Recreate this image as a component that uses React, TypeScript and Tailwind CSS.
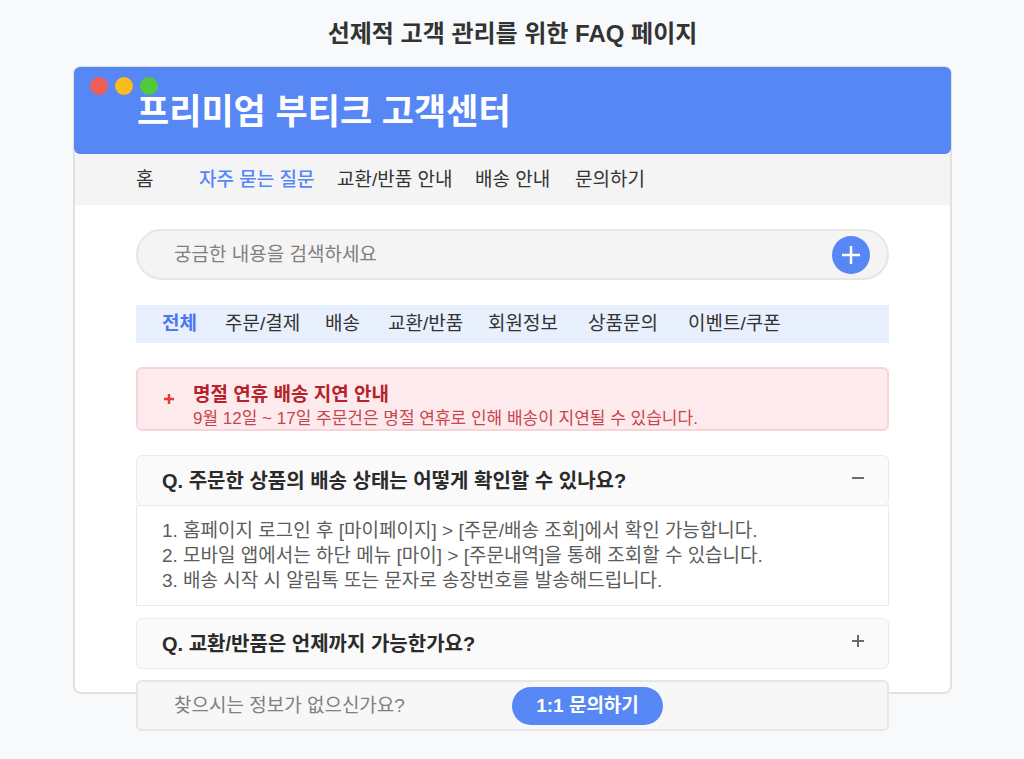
import { useState } from "react";

const navItems = [
  { label: "홈", width: "w-[63px]" },
  { label: "자주 묻는 질문", width: "w-[138px]" },
  { label: "교환/반품 안내", width: "w-[138px]" },
  { label: "배송 안내", width: "w-[100px]" },
  { label: "문의하기", width: "w-[100px]" },
];

const categories = [
  { label: "전체", width: "w-[63px]" },
  { label: "주문/결제", width: "w-[100px]" },
  { label: "배송", width: "w-[63px]" },
  { label: "교환/반품", width: "w-[100px]" },
  { label: "회원정보", width: "w-[100px]" },
  { label: "상품문의", width: "w-[100px]" },
  { label: "이벤트/쿠폰", width: "w-[100px]" },
];

const faqs = [
  {
    question: "Q. 주문한 상품의 배송 상태는 어떻게 확인할 수 있나요?",
    answer: [
      "1. 홈페이지 로그인 후 [마이페이지] > [주문/배송 조회]에서 확인 가능합니다.",
      "2. 모바일 앱에서는 하단 메뉴 [마이] > [주문내역]을 통해 조회할 수 있습니다.",
      "3. 배송 시작 시 알림톡 또는 문자로 송장번호를 발송해드립니다.",
    ],
  },
  {
    question: "Q. 교환/반품은 언제까지 가능한가요?",
    answer: [],
  },
];

function ToggleIcon({ open }: { open: boolean }) {
  return (
    <svg viewBox="0 0 12 12" className="mb-1.5 h-3 w-3" stroke="#6b6b6b" strokeWidth="2" aria-hidden="true">
      <path d="M0 6h12" />
      {!open && <path d="M6 0v12" />}
    </svg>
  );
}

export default function App() {
  const [category, setCategory] = useState("전체");
  const [openFaq, setOpenFaq] = useState(0);
  const [query, setQuery] = useState("");

  return (
    <div className="min-h-screen bg-[#f8f9fb] pr-[72px] pb-16 pl-[73px] font-['Liberation_Sans','Noto_Sans_CJK_KR',sans-serif] text-[19px] leading-6 text-[#333]">
      <h1 className="flex h-[66px] items-center justify-center pt-0.5 text-2xl font-bold whitespace-nowrap">
        선제적 고객 관리를 위한 FAQ 페이지
      </h1>

      <div className="rounded-lg border-2 border-[#dfe1e3] bg-white">
        <header className="relative -mx-px -mt-px flex h-[87px] items-center rounded-md bg-[#5687f5] px-[63px] pt-0.5">
          <div className="absolute top-2.5 left-4 flex gap-[7px]">
            <span className="h-[18px] w-[18px] rounded-full bg-[#f05f57]" />
            <span className="h-[18px] w-[18px] rounded-full bg-[#f8bc1c]" />
            <span className="h-[18px] w-[18px] rounded-full bg-[#52c93c]" />
          </div>
          <h2 className="relative text-[35px] font-bold whitespace-nowrap text-white">프리미엄 부티크 고객센터</h2>
        </header>

        <nav className="flex h-[51px] items-center bg-[#f4f4f4] px-[61px]">
          {navItems.map((item) => (
            <a
              key={item.label}
              href="#"
              className={`${item.width} whitespace-nowrap ${
                item.label === "자주 묻는 질문" ? "font-medium text-[#5687f5]" : ""
              }`}
            >
              {item.label}
            </a>
          ))}
        </nav>

        <main className="px-[61px] pt-6">
          <form
            className="flex h-[51px] items-center rounded-full border-2 border-[#e6e6e6] bg-[#f4f4f4] pr-[17px] pl-9"
            onSubmit={(e) => e.preventDefault()}
          >
            <input
              value={query}
              onChange={(e) => setQuery(e.target.value)}
              placeholder="궁금한 내용을 검색하세요"
              aria-label="검색어"
              className="min-w-0 flex-1 outline-none placeholder:text-[#808080]"
            />
            <button
              type="submit"
              aria-label="검색"
              className="flex h-[38px] w-[38px] items-center justify-center rounded-full bg-[#5687f5]"
            >
              <svg viewBox="0 0 18 18" className="h-[18px] w-[18px]" stroke="white" strokeWidth="2.5">
                <path d="M0 9h18M9 0v18" />
              </svg>
            </button>
          </form>

          <div className="mt-[25px] flex h-[38px] items-center bg-[#e8effd] px-[26px]">
            {categories.map((item) => (
              <button
                key={item.label}
                onClick={() => setCategory(item.label)}
                className={`${item.width} text-left whitespace-nowrap ${
                  category === item.label ? "font-bold text-[#4a78ee]" : ""
                }`}
              >
                {item.label}
              </button>
            ))}
          </div>

          <section className="mt-6 flex h-16 items-center rounded-md border-2 border-[#f7d4d9] bg-[#fdeaed] pl-[26px]">
            <svg viewBox="0 0 10 10" className="h-2.5 w-2.5" stroke="#e53935" strokeWidth="2.5" aria-hidden="true">
              <path d="M0 5h10M5 0v10" />
            </svg>
            <div className="pt-4 pl-[19px]">
              <h3 className="font-bold whitespace-nowrap text-[#b7222a]">명절 연휴 배송 지연 안내</h3>
              <p className="text-[17px] leading-6 whitespace-nowrap text-[#c8454c]">
                9월 12일 ~ 17일 주문건은 명절 연휴로 인해 배송이 지연될 수 있습니다.
              </p>
            </div>
          </section>

          <div className="mt-6 flex flex-col gap-3">
            {faqs.map((faq, i) => (
              <section key={faq.question}>
                <button
                  onClick={() => setOpenFaq(openFaq === i ? -1 : i)}
                  aria-expanded={openFaq === i}
                  className="flex h-[51px] w-full items-center justify-between rounded-md border border-[#ebebeb] bg-[#fafafa] pr-6 pl-[25px] text-left text-xl font-bold whitespace-nowrap text-[#2b2b2b]"
                >
                  {faq.question}
                  <ToggleIcon open={openFaq === i} />
                </button>
                {openFaq === i && faq.answer.length > 0 && (
                  <div className="-mt-px border border-[#ebebeb] bg-white px-[25px] py-3 leading-[25px] text-[#5c5c5c]">
                    {faq.answer.map((line) => (
                      <p key={line} className="whitespace-nowrap">
                        {line}
                      </p>
                    ))}
                  </div>
                )}
              </section>
            ))}
          </div>

          {/* contact bar hangs over the card's bottom edge */}
          <div className="relative mt-[11px] -mb-[39px] flex h-[51px] items-center rounded-md border-2 border-[#e6e6e6] bg-[#f7f7f7] pl-9">
            <p className="w-[338px] whitespace-nowrap text-[#808080]">찾으시는 정보가 없으신가요?</p>
            <button className="h-[38px] w-[151px] rounded-full bg-[#5687f5] font-bold whitespace-nowrap text-white">
              1:1 문의하기
            </button>
          </div>
        </main>
      </div>
    </div>
  );
}
